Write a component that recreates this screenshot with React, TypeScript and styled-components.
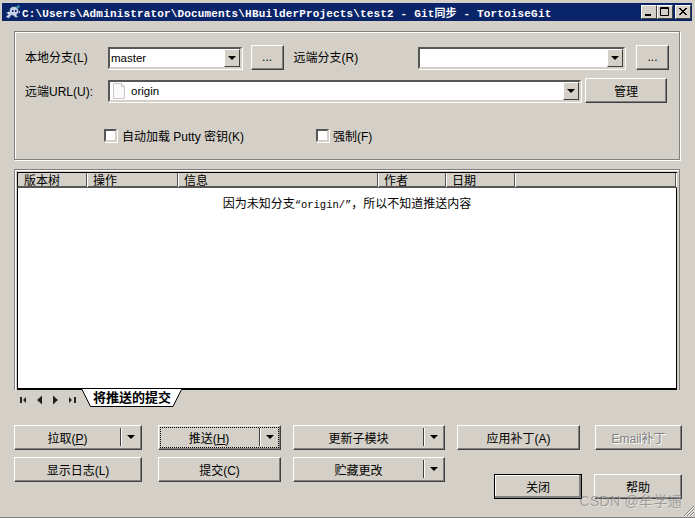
import React from 'react';
import styled, { createGlobalStyle } from 'styled-components';

const GlobalStyle = createGlobalStyle`
  html, body {
    margin: 0;
    padding: 0;
    background: #d4d0c8;
  }
  body {
    font-family: "Liberation Sans", "Noto Sans CJK SC", sans-serif;
    font-size: 12px;
    color: #000;
  }
`;

const Window = styled.div`
  position: relative;
  width: 695px;
  height: 518px;
  box-sizing: border-box;
  overflow: hidden;
  padding-top: 3px;
  background: #d4d0c8;
  border-bottom: 1px solid #808080;
`;

const TitleBar = styled.div`
  display: flex;
  align-items: center;
  height: 18px;
  margin: 0 3px 0 2px;
  padding: 0 1px 0 3px;
  background: #0a246a;
  color: #fff;
`;

const TitleIcon = styled.svg`
  width: 16px;
  height: 16px;
  flex-shrink: 0;
  margin-right: 1px;
`;

const TitleText = styled.div`
  flex: 1;
  font-family: "Liberation Mono", "Noto Sans CJK SC", monospace;
  font-weight: 700;
  font-size: 11px;
  letter-spacing: 0.16px;
  white-space: nowrap;
`;

const CaptionButtons = styled.div`
  display: flex;
`;

const CaptionButton = styled.div<{ $gap?: boolean }>`
  width: 16px;
  height: 14px;
  box-sizing: border-box;
  margin-left: ${(p) => (p.$gap ? '2px' : '0')};
  background: #d4d0c8;
  border: 1px solid;
  border-color: #fff #404040 #404040 #fff;
  display: flex;
  align-items: center;
  justify-content: center;
`;

const Group = styled.section`
  display: flex;
  flex-direction: column;
  box-sizing: border-box;
  width: 666px;
  height: 129px;
  margin: 10px 0 0 14px;
  padding: 13px 10px 0 10px;
  border: 1px solid #808080;
  box-shadow: inset 1px 1px 0 #fff, 1px 1px 0 #fff;
`;

const FieldRow = styled.div`
  display: flex;
  align-items: center;
  height: 25px;
`;

const UrlRow = styled(FieldRow)`
  margin-top: 8px;
`;

const FieldLabel = styled.label<{ $w: number; $ml?: number }>`
  width: ${(p) => p.$w}px;
  margin-left: ${(p) => p.$ml ?? 0}px;
  margin-top: -3px;
  flex-shrink: 0;
`;

const UrlLabel = styled(FieldLabel)`
  margin-top: 0;
`;

const ComboBox = styled.div<{ $w: number }>`
  display: flex;
  align-items: center;
  box-sizing: border-box;
  width: ${(p) => p.$w}px;
  height: 22px;
  background: #fff;
  border: 2px solid;
  border-color: #565656 #d4d0c8 #d4d0c8 #565656;
  box-shadow: 1px 1px 0 #fff;
`;

const ComboText = styled.div`
  flex: 1;
  padding: 1px 0 0 1px;
  font-size: 11.5px;
`;

const ComboArrow = styled.div`
  width: 16px;
  height: 18px;
  box-sizing: border-box;
  background: #d4d0c8;
  border: 1px solid;
  border-color: #fff #404040 #404040 #fff;
  display: flex;
  align-items: center;
  justify-content: center;
`;

const Arrow = styled.span`
  width: 0;
  height: 0;
  border-left: 4px solid transparent;
  border-right: 4px solid transparent;
  border-top: 4px solid #000;
`;

const FileIcon = styled.svg`
  width: 14px;
  height: 16px;
  margin: 0 4px 0 2px;
  flex-shrink: 0;
`;

const Button = styled.button<{ $w?: number; $ml?: number; $default?: boolean; $off?: boolean }>`
  display: flex;
  align-items: center;
  justify-content: center;
  box-sizing: border-box;
  width: ${(p) => (p.$w ? `${p.$w}px` : '100%')};
  height: 25px;
  flex-shrink: 0;
  margin: 0 0 0 ${(p) => p.$ml ?? 0}px;
  padding: 0 0 1px;
  background: #d4d0c8;
  font: inherit;
  color: ${(p) => (p.$off ? '#808080' : '#000')};
  text-shadow: ${(p) => (p.$off ? '1px 1px 0 #fff' : 'none')};
  border: 1px solid;
  border-color: #fff #404040 #404040 #fff;
  box-shadow: inset -1px -1px 0 #808080;
  ${(p) => p.$default && 'outline: 1px solid #000; outline-offset: -1px; box-shadow: inset -2px -2px 0 #808080, inset 1px 1px 0 #fff;'}
`;

const Checks = styled.div`
  display: flex;
  align-items: center;
  height: 14px;
  margin-top: 25px;
  padding-left: 79px;
`;

const CheckBox = styled.span<{ $ml?: number; $mr?: number }>`
  width: 13px;
  height: 13px;
  box-sizing: border-box;
  margin-left: ${(p) => p.$ml ?? 0}px;
  margin-right: ${(p) => p.$mr ?? 5}px;
  background: #fff;
  border: 2px solid;
  border-color: #565656 #d4d0c8 #d4d0c8 #565656;
  box-shadow: 1px 1px 0 #fff;
`;

const ListPanel = styled.section`
  display: flex;
  flex-direction: column;
  box-sizing: border-box;
  width: 666px;
  height: 221px;
  margin: 9px 0 0 14px;
  padding: 2px 2px 0 2px;
  border: 1px solid #808080;
  border-bottom: none;
  box-shadow: inset 1px 1px 0 #fff;
`;

const ListHeader = styled.div`
  display: flex;
  height: 16px;
  flex-shrink: 0;
  box-sizing: border-box;
  border: 1px solid #000;
  border-bottom: 2px solid #565656;
`;

const HeaderCell = styled.div<{ $w?: number }>`
  ${(p) => (p.$w ? `width: ${p.$w}px;` : 'flex: 1;')}
  box-sizing: border-box;
  padding-left: 6px;
  line-height: 16px;
  height: 14px;
  overflow: hidden;
  border-right: 1px solid #565656;
  box-shadow: 1px 0 0 #fff;
`;

const ListBody = styled.div`
  flex: 1;
  background: #fff;
  text-align: center;
  padding-top: 8px;
  line-height: 16px;
  border: 1px solid #000;
  border-top: none;
  border-bottom-width: 2px;
`;

const Mono = styled.span`
  font-family: "Liberation Mono", monospace;
  font-size: 10.5px;
`;

const TabStrip = styled.div`
  display: flex;
  align-items: flex-start;
  height: 17px;
  margin: -1px 0 0 18px;
`;

const TabNav = styled.svg`
  width: 62px;
  height: 12px;
  margin-top: 5px;
  flex-shrink: 0;
`;

const Tab = styled.div`
  position: relative;
  width: 100px;
  height: 18px;
  margin-left: 2px;
  font-size: 13px;
  font-weight: 700;
  text-align: center;
  line-height: 17px;
`;

const TabShape = styled.svg`
  position: absolute;
  inset: 0;
  z-index: 0;
`;

const TabLabel = styled.span`
  position: relative;
`;

const Actions = styled.div`
  display: grid;
  grid-template-columns: 144px 135px 164px 138px 87px;
  grid-auto-rows: 25px;
  row-gap: 7px;
  margin: 19px 0 0 14px;
`;

const SplitWrap = styled(Button)`
  width: 100%;
`;

const SplitLabel = styled.span`
  flex: 1;
  text-align: center;
`;

const SplitArrow = styled.span`
  display: flex;
  align-items: center;
  justify-content: center;
  width: 20px;
  height: 18px;
  border-left: 1px solid #404040;
  box-shadow: inset 1px 0 0 #fff;
`;

const Focus = styled.span`
  position: absolute;
  inset: 2px;
  border: 1px dotted #000;
  pointer-events: none;
`;

const SplitCell = styled.div<{ $w: number }>`
  position: relative;
  width: ${(p) => p.$w}px;
`;

const Footer = styled.div`
  grid-column: 4 / 6;
  display: flex;
  justify-content: flex-end;
  gap: 12px;
  transform: translateY(17px);
`;

const Watermark = styled.div`
  position: absolute;
  right: 13px;
  bottom: 7px;
  font-size: 14px;
  color: rgba(110, 110, 110, 0.55);
  text-shadow: 1px 1px 0 rgba(255, 255, 255, 0.35);
  letter-spacing: 0.3px;
`;

const Grip = styled.svg`
  position: absolute;
  right: 0;
  bottom: 0;
  width: 14px;
  height: 14px;
`;

const u = (s: string) => <u>{s}</u>;

const Split = ({ label, w, focus }: { label: React.ReactNode; w: number; focus?: boolean }) => (
  <SplitCell $w={w}>
    <SplitWrap type="button">
      <SplitLabel>{label}</SplitLabel>
      <SplitArrow><Arrow /></SplitArrow>
    </SplitWrap>
    {focus && <Focus />}
  </SplitCell>
);

const App: React.FC = () => {
  return (
    <Window>
      <GlobalStyle />
      <TitleBar>
        <TitleIcon viewBox="0 0 16 16">
          <path d="M1 13 L4 10 L3 8 L5 8 L5 5 L7 3 L11 3 L13 5 L13 9 L11 11 L13 13 L10 13 L8 11 L6 11 L4 14 Z" fill="#c8d0e4" stroke="#8fa0c8" strokeWidth="0.5" />
          <path d="M11 3 L13 1 L15 2 L14 4 L12 5 Z" fill="#3f8aa8" />
          <rect x="7" y="6" width="1.5" height="2" fill="#0a246a" />
          <rect x="10" y="6" width="1.5" height="2" fill="#0a246a" />
          <path d="M1 9 L4 8 L4 10 Z M13 8 L15 7 L15 9 Z" fill="#fff" />
        </TitleIcon>
        <TitleText>C:\Users\Administrator\Documents\HBuilderProjects\test2 - Git同步 - TortoiseGit</TitleText>
        <CaptionButtons>
          <CaptionButton>
            <svg width="10" height="10" viewBox="0 0 10 10"><rect x="1" y="7" width="6" height="2" fill="#000" /></svg>
          </CaptionButton>
          <CaptionButton>
            <svg width="10" height="10" viewBox="0 0 10 10"><path d="M0.5 0.5h8v8h-8z M0.5 1.5h8" fill="none" stroke="#000" /></svg>
          </CaptionButton>
          <CaptionButton $gap>
            <svg width="10" height="10" viewBox="0 0 10 10"><path d="M1 1l7 7M2 1l7 7M8 1l-7 7M9 1l-7 7" stroke="#000" /></svg>
          </CaptionButton>
        </CaptionButtons>
      </TitleBar>

      <Group>
        <FieldRow>
          <FieldLabel $w={83}>本地分支(L)</FieldLabel>
          <ComboBox $w={134}>
            <ComboText>master</ComboText>
            <ComboArrow><Arrow /></ComboArrow>
          </ComboBox>
          <Button type="button" $w={33} $ml={9}>...</Button>
          <FieldLabel $w={124} $ml={10}>远端分支(R)</FieldLabel>
          <ComboBox $w={208}>
            <ComboText />
            <ComboArrow><Arrow /></ComboArrow>
          </ComboBox>
          <Button type="button" $w={33} $ml={11}>...</Button>
        </FieldRow>
        <UrlRow>
          <UrlLabel $w={83}>远端URL(U):</UrlLabel>
          <ComboBox $w={473}>
            <FileIcon viewBox="0 0 14 16">
              <path d="M1.5 0.5h8l3 3v12h-11z" fill="#fafafa" stroke="#c8c8c8" />
              <path d="M9.5 0.5v3h3" fill="none" stroke="#c8c8c8" />
            </FileIcon>
            <ComboText>origin</ComboText>
            <ComboArrow><Arrow /></ComboArrow>
          </ComboBox>
          <Button type="button" $w={82} $ml={4}>管理</Button>
        </UrlRow>
        <Checks>
          <CheckBox />
          <span>自动加载 Putty 密钥(K)</span>
          <CheckBox $ml={72} $mr={4} />
          <span>强制(F)</span>
        </Checks>
      </Group>

      <ListPanel>
        <ListHeader>
          <HeaderCell $w={69}>版本树</HeaderCell>
          <HeaderCell $w={91}>操作</HeaderCell>
          <HeaderCell $w={200}>信息</HeaderCell>
          <HeaderCell $w={68}>作者</HeaderCell>
          <HeaderCell $w={69}>日期</HeaderCell>
          <HeaderCell />
        </ListHeader>
        <ListBody>
          因为未知分支<Mono>“origin/”</Mono>，所以不知道推送内容
        </ListBody>
      </ListPanel>

      <TabStrip>
        <TabNav viewBox="0 0 62 12">
          <path d="M2 3h2v6H2z M8 3v6L5 6z M24 1.5v9L19 6z M35 1.5v9L40 6z M51 3v6l3-3z M56 3h2v6h-2z" fill="#222" />
        </TabNav>
        <Tab>
          <TabShape width="100" height="18" viewBox="0 0 100 18">
            <path d="M0 0 L8.5 17.5 L91 17.5 L99.5 0 Z" fill="#fff" stroke="none" />
            <path d="M0 0.5 L8.5 17.5 L91 17.5 L99.5 0.5" fill="none" stroke="#000" />
          </TabShape>
          <TabLabel>将推送的提交</TabLabel>
        </Tab>
      </TabStrip>

      <Actions>
        <Split w={128} label={<>拉取({u('P')})</>} />
        <Split w={123} label={<>推送({u('H')})</>} focus />
        <Split w={152} label="更新子模块" />
        <Button type="button" $w={123}>应用补丁(A)</Button>
        <Button type="button" $off>Email补丁</Button>
        <Button type="button" $w={128}>显示日志(L)</Button>
        <Button type="button" $w={123}>提交(C)</Button>
        <Split w={152} label="贮藏更改" />
        <Footer>
          <Button type="button" $w={88} $default>关闭</Button>
          <Button type="button" $w={88}>帮助</Button>
        </Footer>
      </Actions>

      <Watermark>CSDN @牟学通</Watermark>
      <Grip viewBox="0 0 14 14">
        <path d="M13 3L3 13M13 6L6 13M13 9L9 13" stroke="#808080" strokeWidth="1" />
        <path d="M13 4L4 13M13 7L7 13M13 10L10 13" stroke="#fff" strokeWidth="1" />
      </Grip>
    </Window>
  );
};

export default App;
